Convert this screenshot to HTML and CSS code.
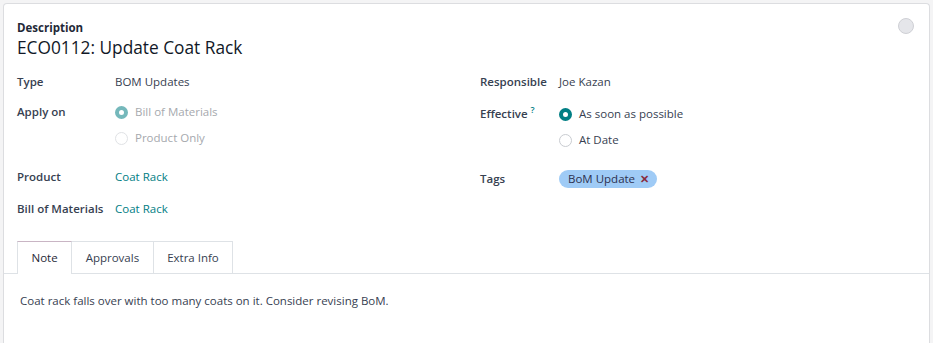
FILE: index.html
```html
<!DOCTYPE html>
<html lang="en">
<head>
    <meta charset="UTF-8">
    <meta name="viewport" content="width=device-width, initial-scale=1.0">
    <title>ECO0112: Update Coat Rack</title>
    <link rel="stylesheet" href="styles.css">
</head>
<body>

<div class="sheet">
    <div class="sheet-header">
        <div>
            <div class="desc-label">Description</div>
            <h1 class="title">ECO0112: Update Coat Rack</h1>
        </div>
        <span class="status-dot"></span>
    </div>

    <div class="groups">
        <div class="group">
            <div class="field">
                <span class="label">Type</span>
                <span class="value">BOM Updates</span>
            </div>
            <div class="field field-radio">
                <span class="label">Apply on</span>
                <div class="radios">
                    <label class="radio disabled"><span class="dot checked"></span>Bill of Materials</label>
                    <label class="radio disabled"><span class="dot"></span>Product Only</label>
                </div>
            </div>
            <div class="field field-tall spaced">
                <span class="label">Product</span>
                <a class="link" href="#">Coat Rack</a>
            </div>
            <div class="field field-tall">
                <span class="label">Bill of Materials</span>
                <a class="link" href="#">Coat Rack</a>
            </div>
        </div>

        <div class="group group-right">
            <div class="field">
                <span class="label">Responsible</span>
                <span class="value">Joe Kazan</span>
            </div>
            <div class="field field-radio effective">
                <span class="label">Effective <sup class="help">?</sup></span>
                <div class="radios">
                    <label class="radio"><span class="dot checked"></span>As soon as possible</label>
                    <label class="radio"><span class="dot"></span>At Date</label>
                </div>
            </div>
            <div class="field field-tall">
                <span class="label">Tags</span>
                <div><span class="tag">BoM Update <span class="tag-x">✕</span></span></div>
            </div>
        </div>
    </div>

    <div class="tabs">
        <a class="tab active" href="#">Note</a>
        <a class="tab" href="#">Approvals</a>
        <a class="tab" href="#">Extra Info</a>
    </div>
    <div class="tab-content">
        <p>Coat rack falls over with too many coats on it. Consider revising BoM.</p>
    </div>
</div>

</body>
</html>
```

FILE: styles.css
```css
body {
    margin: 0;
    padding: 3px 3px 0 3px;
    background-color: #f4f4f5;
    font-family: "Open Sans", Arial, sans-serif;
    font-size: 11.5px;
    color: #374151;
}
.sheet {
    background-color: #fff;
    border: 1px solid #dcdde0;
    border-bottom: none;
    border-radius: 4px 4px 0 0;
    padding: 16px 13px 0 13px;
    min-height: 340px;
}
.sheet-header {
    display: flex;
    justify-content: space-between;
    align-items: flex-start;
}
.desc-label {
    font-weight: 700;
    font-size: 11.5px;
    line-height: 16px;
    color: #1f2937;
}
.title {
    margin: 0;
    font-size: 17.3px;
    font-weight: 400;
    line-height: 24px;
    color: #111827;
}
.status-dot {
    width: 14px;
    height: 14px;
    margin: -2px 2px 0 0;
    border-radius: 50%;
    background-color: #e5e6ea;
    border: 1px solid #cfd0d5;
}
.groups {
    display: grid;
    grid-template-columns: 1fr 1fr;
    column-gap: 27px;
    margin-top: 7px;
}
.field {
    display: grid;
    grid-template-columns: 98px 1fr;
    align-items: center;
    min-height: 30px;
    line-height: 20px;
}
.group-right .field {
    grid-template-columns: 79px 1fr;
}
.field-radio {
    align-items: start;
    padding: 5px 0;
}
.effective {
    padding-top: 7px;
    padding-bottom: 13px;
}
.field-tall {
    min-height: 32px;
}
.spaced {
    margin-top: 8px;
}
.label {
    font-weight: 600;
    color: #374151;
}
.help {
    font-size: 9px;
    line-height: 0;
    color: #017e84;
    font-weight: 600;
}
.value {
    color: #374151;
}
.link {
    color: #017e84;
    text-decoration: none;
}
.radios {
    display: flex;
    flex-direction: column;
    gap: 6px;
}
.radio {
    display: flex;
    align-items: center;
    gap: 7px;
    color: #374151;
}
.radio.disabled {
    color: #a6a9ae;
}
.dot {
    box-sizing: border-box;
    width: 13px;
    height: 13px;
    border-radius: 50%;
    border: 1px solid #c9ccd1;
    background-color: #fff;
}
.dot.checked {
    border: 4px solid #017e84;
}
.radio.disabled .dot {
    border-color: #e0e2e5;
}
.radio.disabled .dot.checked {
    border-color: #75b8bb;
}
.tag {
    display: inline-block;
    padding: 0 8px 0 9px;
    border-radius: 10px;
    background-color: #9fcbf6;
    color: #2d3150;
    line-height: 18px;
}
.tag-x {
    margin-left: 2px;
    color: #8a2d3e;
    font-size: 11px;
    font-weight: 600;
}
.tabs {
    display: flex;
    margin: 16px -13px 0 -13px;
    padding: 0 13px;
    border-bottom: 1px solid #dee2e6;
}
.tab {
    display: block;
    height: 31px;
    line-height: 31px;
    padding: 0 13.5px;
    margin-bottom: -1px;
    color: #374151;
    text-decoration: none;
    border: 1px solid #dee2e6;
    border-left: none;
    border-bottom: none;
}
.tab:first-child {
    border-left: 1px solid #dee2e6;
}
.tab.active {
    border-top: 1px solid #c9b5c4;
    background-color: #fff;
    height: 32px;
    color: #1f2937;
}
.tab-content p {
    margin: 18px 3px;
    line-height: 18px;
    color: #374151;
}
```
